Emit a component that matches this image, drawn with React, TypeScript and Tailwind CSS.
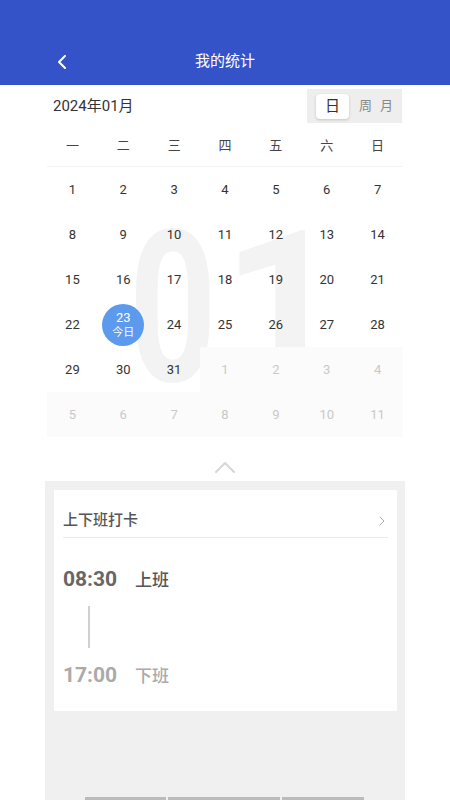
import { ChevronRight } from 'lucide-react'

const WEEK = ['一', '二', '三', '四', '五', '六', '日']

type Day = { n: number; cur: boolean; today?: boolean }

function buildDays(): Day[] {
  const days: Day[] = []
  for (let i = 1; i <= 31; i++) days.push({ n: i, cur: true, today: i === 23 })
  for (let i = 1; i <= 11; i++) days.push({ n: i, cur: false })
  return days
}

const FONT = { fontFamily: 'Roboto, "Noto Sans CJK SC", sans-serif' }

export default function App() {
  const days = buildDays()

  return (
    <div className="w-[450px] h-[800px] bg-white flex flex-col overflow-hidden" style={FONT}>
      {/* header */}
      <div className="h-[85px] shrink-0 bg-[#3553c8] flex items-end">
        <div className="relative h-[46px] w-full flex items-center justify-center">
          <svg
            className="absolute left-[57px] top-[16px]"
            width="10"
            height="14"
            viewBox="0 0 10 14"
            fill="none"
          >
            <path d="M8 1 L2 7 L8 13" stroke="white" strokeWidth="2" strokeLinecap="round" strokeLinejoin="round" />
          </svg>
          <span className="text-white text-[15px] -mt-[1px]">我的统计</span>
        </div>
      </div>

      <div className="mx-[45px] w-[360px] flex flex-col flex-1">
        {/* month + mode toggle */}
        <div className="h-[38px] flex items-center justify-between pl-[8px] pr-[3px]">
          <span className="text-[15px] text-[#333] mt-[4px]">2024年01月</span>
          <div className="mt-[4px] h-[34px] w-[95px] bg-[#eeeeee] flex items-center pl-[9px]">
            <div className="h-[25px] w-[33px] bg-white rounded-[4px] shadow-[0_1px_3px_rgba(0,0,0,0.18)] flex items-center justify-center text-[15px] text-[#333]">
              日
            </div>
            <span className="ml-[10px] text-[13px] text-[#888]">周</span>
            <span className="ml-[8px] text-[13px] text-[#888]">月</span>
          </div>
        </div>

        {/* calendar */}
        <div className="px-[2px]">
          <div className="grid grid-cols-7 h-[44px] items-center border-b border-[#f3f3f3]">
            {WEEK.map((w) => (
              <div key={w} className="text-center text-[13px] text-[#444] mt-[2px]">
                {w}
              </div>
            ))}
          </div>

          <div className="relative grid grid-cols-7">
            {/* month watermark */}
            <div className="absolute inset-0 pointer-events-none">
              <span
                className="absolute top-[36px] left-[82px] text-[212px] leading-none font-bold text-[#f3f3f3] origin-left scale-x-[0.72]"
                style={FONT}
              >
                0
              </span>
              <span
                className="absolute top-[36px] left-[175px] text-[212px] leading-none font-bold text-[#f3f3f3]"
                style={FONT}
              >
                1
              </span>
            </div>
            {days.map((d, i) => (
              <div
                key={i}
                className={`relative h-[45px] flex items-center justify-center ${d.cur ? '' : 'bg-[#fbfbfb]'}`}
              >
                {d.today ? (
                  <div className="w-[42px] h-[42px] rounded-full bg-[#5b9aec] flex flex-col items-center justify-center text-white leading-none">
                    <span className="text-[13px]">{d.n}</span>
                    <span className="text-[11px] mt-[3px]">今日</span>
                  </div>
                ) : (
                  <span className={`text-[13px] ${d.cur ? 'text-[#333]' : 'text-[#c9c9c9]'}`}>{d.n}</span>
                )}
              </div>
            ))}
          </div>
        </div>

        {/* collapse handle */}
        <div className="h-[44px] flex items-start justify-center">
          <svg width="22" height="13" viewBox="0 0 22 13" fill="none" className="mt-[24px]">
            <path d="M2 11 L11 2 L20 11" stroke="#d6d6d6" strokeWidth="2" strokeLinecap="round" strokeLinejoin="round" />
          </svg>
        </div>

        {/* punch panel */}
        <div className="flex-1 bg-[#f0f0f0] pt-[9px] pl-[9px] pr-[8px] flex flex-col">
          <div className="bg-white h-[221px] px-[9px]">
            <div className="h-[48px] flex items-center justify-between border-b border-[#ececec]">
              <span className="text-[15px] font-medium text-[#555] mt-[14px]">上下班打卡</span>
              <ChevronRight size={16} strokeWidth={1.5} className="text-[#aaa] mt-[14px] -mr-[2px]" />
            </div>
            <div className="flex items-baseline mt-[26px]">
              <span className="w-[72px] text-[21px] font-bold text-[#666]">08:30</span>
              <span className="text-[17px] font-medium text-[#555]">上班</span>
            </div>
            <div className="ml-[25px] mt-[10px] w-[2px] h-[42px] bg-[#d0d0d0]" />
            <div className="flex items-baseline mt-[12px]">
              <span className="w-[72px] text-[21px] font-bold text-[#aaa]">17:00</span>
              <span className="text-[17px] font-medium text-[#aaa]">下班</span>
            </div>
          </div>
          <div className="mt-auto flex gap-[2px] pl-[31px]">
            <div className="w-[81px] h-[3px] bg-[#bbbbbb]" />
            <div className="w-[112px] h-[3px] bg-[#bbbbbb]" />
            <div className="w-[82px] h-[3px] bg-[#bbbbbb]" />
          </div>
        </div>
      </div>
    </div>
  )
}
